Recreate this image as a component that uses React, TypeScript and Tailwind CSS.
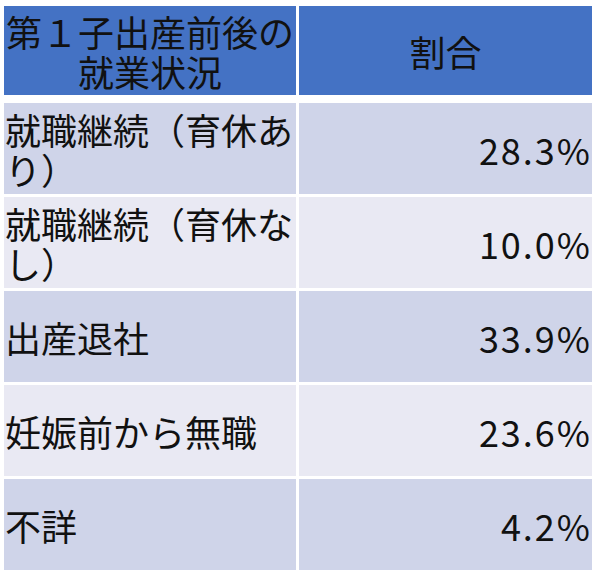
const rows = [
  { label: ['就職継続（育休あ', 'り）'], value: '28.3%' },
  { label: ['就職継続（育休な', 'し）'], value: '10.0%' },
  { label: ['出産退社'], value: '33.9%' },
  { label: ['妊娠前から無職'], value: '23.6%' },
  { label: ['不詳'], value: '4.2%' },
];

export default function App() {
  return (
    <div
      className="w-[600px] h-[575px] bg-white pl-[4px] pt-[6px] text-[#111111]"
      style={{ fontFamily: '"Noto Sans CJK JP", "Noto Sans", sans-serif' }}
    >
      {/* ヘッダー */}
      <div className="grid grid-cols-[292px_293px] gap-x-[3px] h-[89px]">
        <div className="bg-[#4472c4] flex items-center justify-center text-center text-[36px] leading-[40px]">
          <div>
            第１子出産前後の
            <br />
            就業状況
          </div>
        </div>
        <div className="bg-[#4472c4] flex items-center justify-center text-[36px] leading-[40px]">
          割合
        </div>
      </div>

      {/* データ行 */}
      <div className="mt-[8px] grid grid-cols-[292px_293px] auto-rows-[91px] gap-x-[3px] gap-y-[3px]">
        {rows.map((row, i) => {
          const bg = i % 2 === 0 ? 'bg-[#cfd4e9]' : 'bg-[#e9e9f3]';
          return (
            <div key={i} className="contents">
              <div className={`${bg} flex items-center pl-[1px] text-[36px] leading-[40px]`}>
                <div>
                  {row.label.map((l, j) => (
                    <div key={j}>{l}</div>
                  ))}
                </div>
              </div>
              <div className={`${bg} flex items-center justify-end pr-0 text-[36px] leading-[40px] tracking-[2px]`}>
                {row.value}
              </div>
            </div>
          );
        })}
      </div>
    </div>
  );
}
